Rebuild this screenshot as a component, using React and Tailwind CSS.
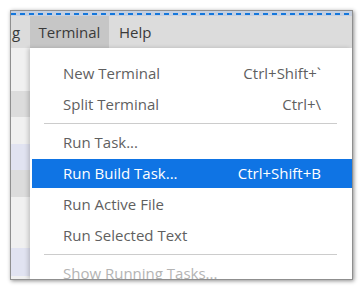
import React from 'react';

const items = [
    { label: 'New Terminal', keys: 'Ctrl+Shift+`' },
    { label: 'Split Terminal', keys: 'Ctrl+\\' },
    { sep: true },
    { label: 'Run Task...' },
    { label: 'Run Build Task...', keys: 'Ctrl+Shift+B', active: true },
    { label: 'Run Active File' },
    { label: 'Run Selected Text' },
    { sep: true },
    { label: 'Show Running Tasks...', disabled: true },
];

const bands = [
    ['h-[43px]', 'bg-[#f0f0f0]'],
    ['h-[26px]', 'bg-[#dcdcdc]'],
    ['h-[27px]', 'bg-[#f0f0f0]'],
    ['h-[26px]', 'bg-[#e1e3f1]'],
    ['h-[27px]', 'bg-[#dcdcdc]'],
    ['h-[51px]', 'bg-[#f0f0f0]'],
    ['h-[28px]', 'bg-[#e1e3f1]'],
    ['h-[10px]', 'bg-[#f0f0f0]'],
];

export default function App() {
    return (
        <div className="w-[363px] h-[290px] bg-white overflow-hidden pt-[10px] pl-[10px] font-['Open_Sans',sans-serif]">
            <div className="w-[343px] h-[270px] flex flex-col overflow-hidden border border-[#8f8f8f] shadow-[1px_1px_4px_rgba(0,0,0,0.45)]">
                <div className="h-[5px] bg-[#c6d0e0] flex flex-col justify-end shrink-0">
                    <div className="h-[2px] mb-[1px] bg-[repeating-linear-gradient(90deg,#1477dc_0_5px,transparent_5px_9px)]" />
                </div>
                <div className="h-[32px] bg-[#dcdcdc] flex items-stretch text-[15px] text-[#3a3a3a] shrink-0">
                    <div className="w-[19px] flex items-center pl-[1px]">g</div>
                    <div className="w-[79px] bg-[#c6c6c6] flex items-center justify-center">Terminal</div>
                    <div className="px-[10px] flex items-center">Help</div>
                </div>
                <div className="flex flex-1 min-h-0">
                    <div className="w-[19px] flex flex-col shrink-0">
                        {bands.map(([h, bg], i) => (
                            <div key={i} className={`${h} ${bg} shrink-0`} />
                        ))}
                    </div>
                    <div className="flex-1 bg-white pt-[10px] pl-[2px] shadow-[-2px_0_4px_rgba(0,0,0,0.18)] text-[15px]">
                        {items.map((it, i) =>
                            it.sep ? (
                                <div key={i} className="h-[7px] flex items-center pl-[12px] pr-[15px]">
                                    <div className="h-px w-full bg-[#cccccc]" />
                                </div>
                            ) : (
                                <div key={i} className="h-[31px] py-[1px]">
                                    <div
                                        className={`h-full flex items-center justify-between pl-[31px] pr-[31px] ${
                                            it.active
                                                ? 'bg-[#0f74e4] text-white'
                                                : it.disabled
                                                ? 'text-[#b4b4b4]'
                                                : 'text-[#5f5f5f]'
                                        }`}
                                    >
                                        <span>{it.label}</span>
                                        {it.keys && <span>{it.keys}</span>}
                                    </div>
                                </div>
                            ),
                        )}
                    </div>
                </div>
            </div>
        </div>
    );
}
